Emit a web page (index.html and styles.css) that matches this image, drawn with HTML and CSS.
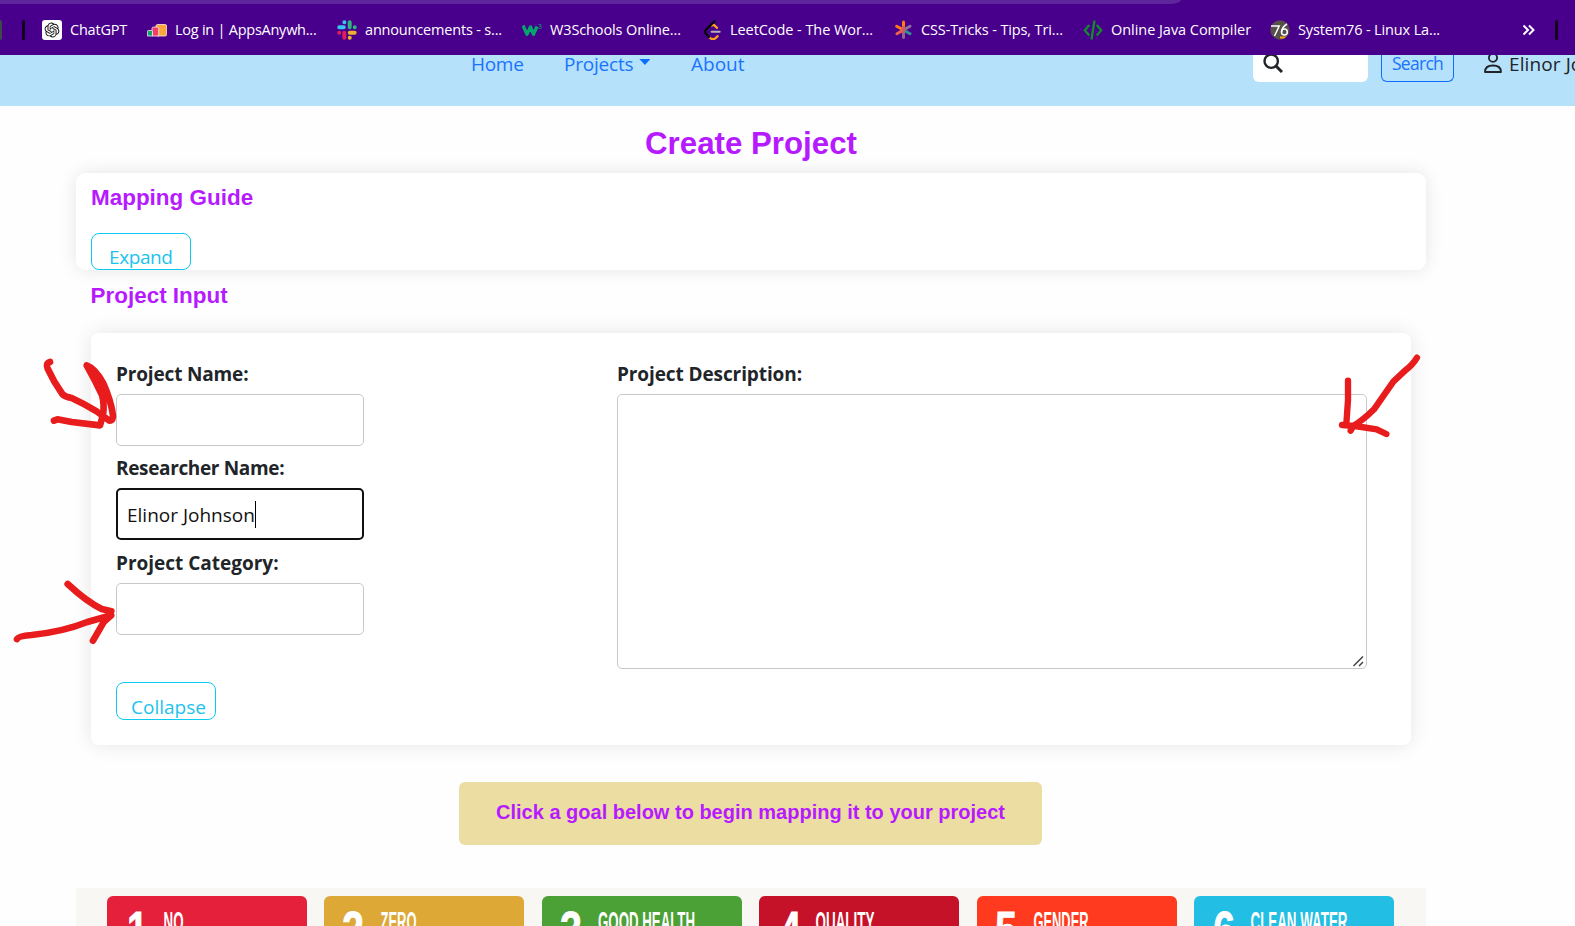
FILE: index.html
```html
<!DOCTYPE html>
<html lang="en">
<head>
<meta charset="utf-8">
<title>Create Project</title>
<link rel="stylesheet" href="styles.css">
</head>
<body>
<div class="browser-bar">
  <div class="toolbar-edge"></div>
  <div class="bookmarks">
    <span class="cut-icon"></span>
    <span class="divider"></span>
    <a class="bookmark bm-chatgpt"><svg class="icon" viewBox="0 0 20 20"><rect width="20" height="20" rx="3" fill="#fff"/><path transform="translate(2.6 2.6) scale(.617)" fill="#111" d="M22.2819 9.8211a5.9847 5.9847 0 0 0-.5157-4.9108 6.0462 6.0462 0 0 0-6.5098-2.9A6.0651 6.0651 0 0 0 4.9807 4.1818a5.9847 5.9847 0 0 0-3.9977 2.9 6.0462 6.0462 0 0 0 .7427 7.0966 5.98 5.98 0 0 0 .511 4.9107 6.051 6.051 0 0 0 6.5146 2.9001A5.9847 5.9847 0 0 0 13.2599 24a6.0557 6.0557 0 0 0 5.7718-4.2058 5.9894 5.9894 0 0 0 3.9977-2.9001 6.0557 6.0557 0 0 0-.7475-7.0729zm-9.022 12.6081a4.4755 4.4755 0 0 1-2.8764-1.0408l.1419-.0804 4.7783-2.7582a.7948.7948 0 0 0 .3927-.6813v-6.7369l2.02 1.1686a.071.071 0 0 1 .038.052v5.5826a4.504 4.504 0 0 1-4.4945 4.4944zm-9.6607-4.1254a4.4708 4.4708 0 0 1-.5346-3.0137l.142.0852 4.783 2.7582a.7712.7712 0 0 0 .7806 0l5.8428-3.3685v2.3324a.0804.0804 0 0 1-.0332.0615L9.74 19.9502a4.4992 4.4992 0 0 1-6.1408-1.6464zM2.3408 7.8956a4.485 4.485 0 0 1 2.3655-1.9728V11.6a.7664.7664 0 0 0 .3879.6765l5.8144 3.3543-2.0201 1.1685a.0757.0757 0 0 1-.071 0l-4.8303-2.7865A4.504 4.504 0 0 1 2.3408 7.872zm16.5963 3.8558L13.1038 8.364 15.1192 7.2a.0757.0757 0 0 1 .071 0l4.8303 2.7913a4.4944 4.4944 0 0 1-.6765 8.1042v-5.6772a.79.79 0 0 0-.407-.667zm2.0107-3.0231l-.142-.0852-4.7735-2.7818a.7759.7759 0 0 0-.7854 0L9.409 9.2297V6.8974a.0662.0662 0 0 1 .0284-.0615l4.8303-2.7866a4.4992 4.4992 0 0 1 6.6802 4.66zM8.3065 12.863l-2.02-1.1638a.0804.0804 0 0 1-.038-.0567V6.0742a4.4992 4.4992 0 0 1 7.3757-3.4537l-.142.0805L8.704 5.459a.7948.7948 0 0 0-.3927.6813zm1.0976-2.3654l2.602-1.4998 2.6069 1.4998v2.9994l-2.5974 1.4997-2.6067-1.4997Z"/></svg><span>ChatGPT</span></a>
    <a class="bookmark bm-apps"><svg class="icon" viewBox="0 0 20 20"><g stroke="#ffe9e4" stroke-width=".8"><rect x="9" y="4.500" width="10.600" height="11.500" rx="1.500" fill="#fba63c"/><path d="M5 8.500q0-1.500 1.500-1.500H10q1.700 0 1.700 1.700V16H5z" fill="#f0406a"/><path d="M.4 11.500q0-1 1-1H4.500q1 0 1 1V16H.4z" fill="#12a26c"/></g></svg><span>Log in | AppsAnywh...</span></a>
    <a class="bookmark bm-slack"><svg class="icon" viewBox="0 0 20 20"><g stroke-width="3.900" stroke-linecap="round"><path d="M2.200 7.300h4.600M7.300 2.200h.1" stroke="#36c5f0"/><path d="M12.700 2.200v5M17.700 7.300h.1" stroke="#2eb67d"/><path d="M12.700 12.800h5M12.700 17.800h.1" stroke="#ecb22e"/><path d="M7.300 12.800v5M2.200 12.800h.1" stroke="#e01e5a"/></g></svg><span>announcements - s...</span></a>
    <a class="bookmark bm-w3"><svg class="icon" viewBox="0 0 20 20"><path d="M1 5.500 5 14.300 8.500 7l3 7.300L15 6.500" fill="none" stroke="#04a56c" stroke-width="3.300" stroke-linejoin="round"/><text x="15.800" y="9" font-size="7.500" fill="#04a56c" font-family="Open Sans, sans-serif">3</text></svg><span>W3Schools Online...</span></a>
    <a class="bookmark bm-leet"><svg class="icon" viewBox="0 0 20 20" fill="none" stroke-width="2.300" stroke-linecap="round"><path d="M7.500 17.500q3.500 3.500 6.800 0l1.200-1.300M9.800 5.500 12 5l3 2.800" stroke="#ffa116"/><path d="M12.500 1.200 4 9.800q-1.800 2 0 4l3 3.200" stroke="#070707"/><path d="M9.700 11.700h8" stroke="#b3b3b3" stroke-width="2"/></svg><span>LeetCode - The Wor...</span></a>
    <a class="bookmark bm-css"><svg class="icon" viewBox="0 0 20 20" fill="none" stroke-width="3" stroke-linecap="round"><g transform="translate(1 -.5)"><path d="M9.500 10.500V2.500" stroke="#ff7a18"/><path d="M9.500 10.500V18" stroke="#936093"/><path d="M9.500 10.500 2.700 6.700" stroke="#ff7a18"/><path d="M9.500 10.500 2.900 14.300" stroke="#ef604b"/><path d="M9.500 10.500 16 6.700" stroke="#8d6e9a"/><path d="M9.500 10.500 16 14.300" stroke="#319197"/><path d="M9.500 8v4" stroke="#d65562"/></g></svg><span>CSS-Tricks - Tips, Tri...</span></a>
    <a class="bookmark bm-java"><svg class="icon" viewBox="0 0 20 20" fill="none" stroke="#138a2c" stroke-width="2.300"><path d="M6.300 5 1.800 10.300 6.300 15.500M13.700 5l4.500 5.300-4.500 5.200M11.500.500 8.500 19.500"/></svg><span>Online Java Compiler</span></a>
    <a class="bookmark bm-s76"><svg class="icon" viewBox="0 0 20 20"><circle cx="10" cy="10" r="9.700" fill="#574f4a"/><path d="M10 16.500h6.500l-2.500 2h-4z" fill="#f5a623"/><g fill="none" stroke="#fff" stroke-width="1.500"><path d="M1 6h8.200L4.500 16M17 4q-5 3-5.500 8"/><ellipse cx="14.400" cy="12" rx="2.900" ry="3"/></g></svg><span>System76 - Linux La...</span></a>
    <svg class="more" viewBox="0 0 13 12" fill="none" stroke="#fff" stroke-width="2"><path d="M1.500 1.500 6 6l-4.500 4.500M7 1.500 11.500 6 7 10.500"/></svg>
    <span class="divider"></span>
  </div>
</div>

<header class="site-header">
  <nav class="site-nav">
    <a class="nav-home">Home</a>
    <a class="nav-projects">Projects<span class="caret"></span></a>
    <a class="nav-about">About</a>
  </nav>
  <div class="search-box"><svg class="magnifier" viewBox="0 0 20 20" fill="none" stroke="#212529"><circle cx="8.200" cy="8.200" r="6.700" stroke-width="2.400"/><path d="m13 13 6 6" stroke-width="3"/></svg></div>
  <div class="search-button">Search</div>
  <div class="user"><svg class="user-icon" viewBox="0 0 18 20" fill="none" stroke="#212529" stroke-width="1.800"><circle cx="9" cy="4.800" r="4.100"/><path d="M1 19q0-6.500 8-6.500t8 6.500z" stroke-linejoin="round"/></svg><span>Elinor Johnson</span></div>
</header>

<main class="page">
  <h1 class="page-title">Create Project</h1>
  <section class="guide-card">
    <h2 class="section-title">Mapping Guide</h2>
    <div class="toggle toggle-expand">Expand</div>
  </section>
  <h2 class="section-title input-title">Project Input</h2>
  <section class="input-card">
    <div class="fields">
      <div class="field f-name"><label>Project Name:</label><div class="control"></div></div>
      <div class="field f-researcher"><label>Researcher Name:</label><div class="control focused"><span>Elinor Johnson</span><i class="text-cursor"></i></div></div>
      <div class="field f-category"><label>Project Category:</label><div class="control"></div></div>
      <div class="toggle toggle-collapse">Collapse</div>
    </div>
    <div class="field f-description"><label>Project Description:</label><div class="description"><svg class="grip" viewBox="0 0 11 11" stroke="#444" stroke-width="1.500"><path d="M.5 10 10 .5M6 10 10 6"/></svg></div></div>
  </section>
  <div class="banner">Click a goal below to begin mapping it to your project</div>
  <section class="goals">
    <div class="goal g1"><svg viewBox="0 0 200 60"><text class="num" x="20" y="52" textLength="21" lengthAdjust="spacingAndGlyphs">1</text><text class="name" x="56.500" y="35" textLength="20" lengthAdjust="spacingAndGlyphs">NO</text></svg></div>
    <div class="goal g2"><svg viewBox="0 0 200 60"><text class="num" x="18" y="52" textLength="22" lengthAdjust="spacingAndGlyphs">2</text><text class="name" x="56.500" y="35" textLength="36" lengthAdjust="spacingAndGlyphs">ZERO</text></svg></div>
    <div class="goal g3"><svg viewBox="0 0 200 60"><text class="num" x="18" y="52" textLength="22" lengthAdjust="spacingAndGlyphs">3</text><text class="name" x="56" y="35" textLength="97" lengthAdjust="spacingAndGlyphs">GOOD HEALTH</text></svg></div>
    <div class="goal g4"><svg viewBox="0 0 200 60"><text class="num" x="21" y="52" textLength="21" lengthAdjust="spacingAndGlyphs">4</text><text class="name" x="56.500" y="35" textLength="59" lengthAdjust="spacingAndGlyphs">QUALITY</text></svg></div>
    <div class="goal g5"><svg viewBox="0 0 200 60"><text class="num" x="18" y="52" textLength="22" lengthAdjust="spacingAndGlyphs">5</text><text class="name" x="56.500" y="35" textLength="55" lengthAdjust="spacingAndGlyphs">GENDER</text></svg></div>
    <div class="goal g6"><svg viewBox="0 0 200 60"><text class="num" x="19" y="52" textLength="22" lengthAdjust="spacingAndGlyphs">6</text><text class="name" x="56.500" y="35" textLength="97" lengthAdjust="spacingAndGlyphs">CLEAN WATER</text></svg></div>
  </section>
</main>

<svg class="annotations" viewBox="0 0 1575 926" fill="none" stroke="#e81c1c" stroke-linecap="round" stroke-linejoin="round">
  <g transform="translate(0 320) scale(.33333)" stroke-width="20">
    <path d="M150 126Q136 130 143 146Q160 184 187 222Q194 230 215 234Q250 250 290 274L328 302Q342 302 338 280Q332 240 310 190Q285 145 260 136Q285 180 306 225Q314 255 309 285L300 316L215 306L172 298L162 302"/>
    <path d="M262 140 296 195 312 228" stroke-width="16"/>
    <path d="M203 792Q260 845 305 867L334 874M51 957Q56 948 95 945Q190 935 262 906L334 886L312 905L279 962"/>
  </g>
  <g transform="translate(1300 320) scale(.33333)" stroke-width="19">
    <path d="M351 113Q338 135 315 152L280 185L222 268Q190 300 160 318L152 332M144 182V240L139 312M126 315 165 318 230 328 259 342"/>
  </g>
</svg>
</body>
</html>
```
FILE: styles.css
```css
* { box-sizing: border-box; }
body {
  margin: 0;
  width: 1575px;
  height: 926px;
  overflow: hidden;
  position: relative;
  background: #fefefe;
  color: #212529;
  font: 19px/27px "Open Sans", "Noto Sans", sans-serif;
}
svg { display: block; flex: none; }
h1, h2 { margin: 0; font-family: "Liberation Sans", Arial, sans-serif; font-weight: 700; color: #b61aff; }

/* Browser chrome */
.browser-bar { height: 55px; background: #48008c; overflow: hidden; }
.toolbar-edge { width: 1181px; height: 4px; background: #5f259d; border-bottom-right-radius: 12px 4px; }
.bookmarks { display: flex; align-items: center; height: 51px; font-size: 14.5px; line-height: 20px; color: #fff; }
.cut-icon { width: 2px; height: 20px; background: #3f4a46; border-radius: 0 3px 3px 0; }
.divider { width: 3px; height: 20px; margin: 0 17px 0 20px; background: #12001f; border-radius: 2px; flex: none; }
.bookmark { display: flex; align-items: center; gap: 8px; flex: none; white-space: nowrap; }
.icon { width: 20px; height: 20px; }
.bm-chatgpt { width: 105px; letter-spacing: -.21px; }
.bm-apps { width: 190px; letter-spacing: -.25px; }
.bm-slack { width: 185px; letter-spacing: -.18px; }
.bm-w3 { width: 180px; letter-spacing: -.12px; }
.bm-leet { width: 191px; letter-spacing: -.06px; }
.bm-css { width: 190px; letter-spacing: -.12px; }
.bm-java { width: 187px; letter-spacing: -.04px; }
.bm-s76 { width: 252px; letter-spacing: -.14px; }
.more { width: 13px; height: 12px; }

/* Site header */
.site-header { display: flex; height: 51px; padding-left: 471px; background: #b5e1fa; line-height: 18px; overflow: hidden; white-space: nowrap; }
.site-header > * { flex: none; }
.site-nav { display: flex; width: 782px; color: #1a73ff; }
.nav-home { width: 93px; letter-spacing: -.3px; }
.nav-projects { display: flex; width: 127px; letter-spacing: -.2px; }
.caret { margin: 4px 0 0 6px; width: 11px; height: 6px; background: #0d6efd; clip-path: polygon(0 0, 100% 0, 50% 100%); }
.search-box { width: 115px; height: 27px; padding-left: 10px; background: #fff; border-radius: 0 0 6px 6px; }
.magnifier { width: 20px; height: 20px; margin-top: -2px; }
.search-button { width: 73px; height: 27px; margin-left: 13px; border: 1px solid #0d6efd; border-top: 0; border-radius: 0 0 6px 6px; text-align: center; color: #1a73ff; font-size: 17.5px; line-height: 16px; letter-spacing: -.7px; }
.user { display: flex; gap: 7px; margin-left: 30px; letter-spacing: .1px; }
.user-icon { width: 18px; height: 20px; margin-top: -2px; }

/* Page */
.page { width: 1350px; margin-left: 76px; padding-top: 17px; }
.page-title { font-size: 31.26px; line-height: 41px; text-align: center; }
.section-title { padding-top: 1px; font-size: 22.46px; line-height: 28px; }
.guide-card { height: 97px; margin-top: 9px; padding: 10px 15px 0; background: #fff; border-radius: 9px; box-shadow: 0 0 18px rgba(0, 0, 0, .1); }
.toggle { width: 100px; border: 1px solid #0dcaf0; border-radius: 8px; color: #1cc3ee; line-height: 27px; }
.toggle-expand { height: 37px; margin-top: 21px; padding: 10px 0 0 17px; letter-spacing: -.4px; line-height: 26px; }
.toggle-collapse { height: 38px; margin-top: 47px; padding: 11px 0 0 14px; line-height: 26px; }
.input-title { margin: 11px 0 0 14.5px; }
.input-card { display: flex; justify-content: space-between; height: 412px; margin: 23px 15px 0; padding: 28px 44px 0 25px; background: #fff; border-radius: 8px; box-shadow: 0 0 20px rgba(0, 0, 0, .1); }
.fields { width: 248px; }
.field label { display: block; height: 33px; font-weight: 700; }
.f-name { height: 94px; letter-spacing: -.16px; }
.f-researcher { height: 95px; letter-spacing: -.35px; }
.f-category { letter-spacing: -.01px; }
.f-description { width: 750px; letter-spacing: -.1px; }
.control { display: flex; align-items: center; height: 52px; padding: 2px 9px 0; border: 1px solid #c8c8c8; border-radius: 5px; background: #fff; color: #111; letter-spacing: 0; }
.control.focused { border: 2px solid #101010; }
.text-cursor { width: 1px; height: 27px; margin-bottom: 2px; background: #000; }
.description { display: flex; justify-content: flex-end; align-items: flex-end; width: 750px; height: 275px; padding: 0 2px 1px; border: 1px solid #c8c8c8; border-radius: 5px; background: #fff; }
.grip { width: 11px; height: 11px; }
.banner { width: 583px; height: 63px; margin: 37px 0 0 383px; background: #ecdda2; border-radius: 6px; color: #b61aff; font: 700 20px/60px "Liberation Sans", Arial, sans-serif; text-align: center; }

/* Goal tiles */
.goals { display: grid; grid-template-columns: repeat(6, 200px); column-gap: 17.45px; height: 60px; margin-top: 43px; padding: 8px 0 0 31px; background: #f8f7f3; }
.goal { height: 60px; border-radius: 6px; overflow: hidden; fill: #fff; font-family: "Liberation Sans Narrow", "Liberation Sans", Arial, sans-serif; font-weight: 700; }
.goal svg { width: 200px; height: 60px; }
.num { font-size: 52px; stroke: #fff; stroke-width: .8px; }
.name { font-size: 27px; }
.g1 { background: #e5203a; }
.g2 { background: #dda836; }
.g3 { background: #4ca136; }
.g4 { background: #c61228; }
.g5 { background: #ff3a1e; }
.g6 { background: #22bee4; }

/* Hand-drawn arrows over the form */
.annotations { position: absolute; left: 0; top: 0; width: 1575px; height: 926px; pointer-events: none; }
```
